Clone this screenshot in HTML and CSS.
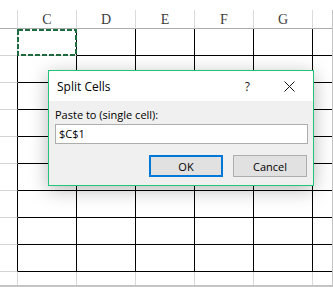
FILE: index.html
```html
<!DOCTYPE html>
<html>
<head>
<meta charset="utf-8">
<link rel="stylesheet" href="styles.css">
</head>
<body>
<div class="sheet">
  <div class="grid">
    <div class="hd"></div><div class="hd">C</div><div class="hd">D</div><div class="hd">E</div><div class="hd">F</div><div class="hd">G</div><div class="hd last"></div>

    <div class="c"></div><div class="c sel"></div><div class="c b"></div><div class="c b"></div><div class="c b"></div><div class="c b"></div><div class="c b last"></div>

    <div class="c s"></div><div class="c b"></div><div class="c b"></div><div class="c b"></div><div class="c b"></div><div class="c b"></div><div class="c b last"></div>
    <div class="c s"></div><div class="c b"></div><div class="c b"></div><div class="c b"></div><div class="c b"></div><div class="c b"></div><div class="c b last"></div>
    <div class="c s"></div><div class="c b"></div><div class="c b"></div><div class="c b"></div><div class="c b"></div><div class="c b"></div><div class="c b last"></div>
    <div class="c s"></div><div class="c b"></div><div class="c b"></div><div class="c b"></div><div class="c b"></div><div class="c b"></div><div class="c b last"></div>
    <div class="c s"></div><div class="c b"></div><div class="c b"></div><div class="c b"></div><div class="c b"></div><div class="c b"></div><div class="c b last"></div>
    <div class="c s"></div><div class="c b"></div><div class="c b"></div><div class="c b"></div><div class="c b"></div><div class="c b"></div><div class="c b last"></div>
    <div class="c s"></div><div class="c b"></div><div class="c b"></div><div class="c b"></div><div class="c b"></div><div class="c b"></div><div class="c b last"></div>
    <div class="c s"></div><div class="c b"></div><div class="c b"></div><div class="c b"></div><div class="c b"></div><div class="c b"></div><div class="c b last"></div>

    <div class="p"></div><div class="p"></div><div class="p"></div><div class="p"></div><div class="p"></div><div class="p"></div><div class="p last"></div>
  </div>
</div>

<svg class="marquee" width="80" height="60" viewBox="0 0 80 60">
  <rect x="18" y="30" width="58" height="25" fill="none" stroke="#1e6b40" stroke-width="2" stroke-dasharray="5 2"/>
</svg>

<div class="dialog">
  <div class="titlebar">
    <span class="title">Split Cells</span>
    <span class="help">?</span>
    <svg class="close" width="11" height="11" viewBox="0 0 11 11">
      <path d="M0.5 0.5 L10.5 10.5 M10.5 0.5 L0.5 10.5" stroke="#1a1a1a" stroke-width="1" fill="none"/>
    </svg>
  </div>
  <div class="body">
    <div class="label">Paste to (single cell):</div>
    <div class="input">$C$1</div>
    <div class="buttons">
      <div class="btn ok">OK</div>
      <div class="btn">Cancel</div>
    </div>
  </div>
</div>
</body>
</html>
```

FILE: styles.css
```css
html, body {
  margin: 0;
  padding: 0;
  background: #ffffff;
}
body {
  position: relative;
  width: 333px;
  height: 287px;
  overflow: hidden;
}
.sheet {
  padding-top: 10px;
  width: 333px;
  box-sizing: border-box;
}
.grid {
  display: grid;
  grid-template-columns: 18px repeat(5, 59px) 19px;
  grid-template-rows: 19px repeat(9, 27px) 13px;
  border-right: 1px solid #c4c4c4;
  border-bottom: 2px solid #c4c4c4;
  width: 333px;
  box-sizing: border-box;
}
.grid > div {
  box-sizing: border-box;
}
.hd {
  border-right: 1px solid #dadada;
  border-bottom: 1px solid #ababab;
  font-family: "Liberation Serif", "Times New Roman", serif;
  font-size: 14px;
  color: #3c3c3c;
  display: flex;
  align-items: center;
  justify-content: center;
  padding-top: 1px;
}
.c {
  border-right: 1px solid #d4d4d4;
  border-bottom: 1px solid #d4d4d4;
}
.c.s {
  border-right-color: #000;
}
.c.b {
  border-right-color: #000;
  border-bottom-color: #000;
}
.c.sel {
  border-right-color: #000;
}
.p {
  border-right: 1px solid #d8d8d8;
}
.grid > .last {
  border-right: none;
}
.marquee {
  position: absolute;
  left: 0;
  top: 0;
}
.dialog {
  position: absolute;
  left: 48px;
  top: 70px;
  width: 266px;
  height: 116px;
  box-sizing: border-box;
  border: 1px solid #22c47c;
  background: #f0f0f0;
  box-shadow: 0 4px 18px rgba(0, 0, 0, 0.28);
  font-family: "Open Sans", "Noto Sans", sans-serif;
  font-size: 11px;
  color: #000;
  display: flex;
  flex-direction: column;
}
.titlebar {
  height: 30px;
  background: #ffffff;
  display: flex;
  align-items: center;
  padding-left: 8px;
  padding-right: 18px;
}
.title {
  flex: 1;
  font-size: 12px;
  color: #000;
}
.help {
  font-size: 12px;
  color: #1a1a1a;
  margin-right: 34px;
}
.close {
  display: block;
}
.body {
  flex: 1;
  padding: 6px 5px 0 6px;
  display: flex;
  flex-direction: column;
}
.label {
  height: 16px;
  line-height: 16px;
}
.input {
  margin-top: 1px;
  height: 20px;
  box-sizing: border-box;
  border: 1px solid #adadad;
  background: #fff;
  line-height: 18px;
  padding-left: 3px;
}
.buttons {
  margin-top: 11px;
  display: flex;
  justify-content: flex-end;
  gap: 10px;
  padding-right: 1px;
}
.btn {
  width: 74px;
  height: 22px;
  box-sizing: border-box;
  border: 1px solid #adadad;
  background: #e1e1e1;
  display: flex;
  align-items: center;
  justify-content: center;
}
.btn.ok {
  border: 2px solid #0078d7;
}
```
